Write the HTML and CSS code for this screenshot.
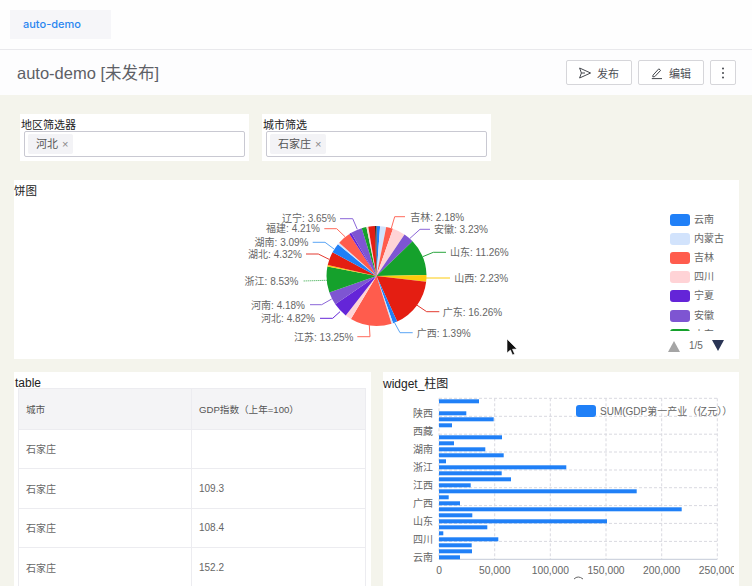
FILE: index.html
```html
<!DOCTYPE html>
<html lang="zh-CN">
<head>
    <meta charset="UTF-8">
    <meta name="viewport" content="width=device-width, initial-scale=1.0">
    <title>auto-demo</title>
    <link rel="stylesheet" href="styles.css">
</head>
<body>
    <header class="tabbar">
        <div class="tab">auto-demo</div>
    </header>

    <div class="titlebar">
        <h1>auto-demo [未发布]</h1>
        <div class="actions">
            <button class="btn">
                <svg width="14" height="14" viewBox="0 0 14 14"><path class="icon-line" d="M1.6 2 L12.6 7 L1.6 12 L3.4 7 Z M3.4 7 H7"/></svg>
                发布
            </button>
            <button class="btn">
                <svg width="14" height="14" viewBox="0 0 14 14"><path class="icon-line" d="M3 9.2 L8.8 2.8 L10.6 4.4 L4.8 10.6 L2.8 10.9 Z M1.8 12.6 H12"/></svg>
                编辑
            </button>
            <button class="btn btn-more">
                <svg width="4" height="14" viewBox="0 0 4 14"><circle class="dot" cx="2" cy="2.5" r="1"/><circle class="dot" cx="2" cy="7" r="1"/><circle class="dot" cx="2" cy="11.5" r="1"/></svg>
            </button>
        </div>
    </div>

    <main class="dashboard">
        <div class="filters">
            <div class="filter">
                <label>地区筛选器</label>
                <div class="select"><span class="tag">河北<i>×</i></span></div>
            </div>
            <div class="filter">
                <label>城市筛选</label>
                <div class="select"><span class="tag">石家庄<i>×</i></span></div>
            </div>
        </div>

        <section class="card card-pie">
            <div class="card-title">饼图</div>
            <div class="pie-body">
                <svg class="pie-svg" width="650" height="163" viewBox="14 196 650 163">
                    <g transform="rotate(-90 376.5 276)">
                        <circle class="slice c-blue" cx="376.5" cy="276" r="25" pathLength="100" stroke-dasharray="1.2 100" stroke-dashoffset="0"/>
                        <circle class="slice c-skyl" cx="376.5" cy="276" r="25" pathLength="100" stroke-dasharray="2 100" stroke-dashoffset="-1.2"/>
                        <circle class="slice c-coral" cx="376.5" cy="276" r="25" pathLength="100" stroke-dasharray="2.18 100" stroke-dashoffset="-3.2"/>
                        <circle class="slice c-pink" cx="376.5" cy="276" r="25" pathLength="100" stroke-dasharray="4.1 100" stroke-dashoffset="-5.38"/>
                        <circle class="slice c-lpurple" cx="376.5" cy="276" r="25" pathLength="100" stroke-dasharray="3.3 100" stroke-dashoffset="-9.5"/>
                        <circle class="slice c-green" cx="376.5" cy="276" r="25" pathLength="100" stroke-dasharray="11.9 100" stroke-dashoffset="-12.8"/>
                        <circle class="slice c-yellow" cx="376.5" cy="276" r="25" pathLength="100" stroke-dasharray="2.23 100" stroke-dashoffset="-24.7"/>
                        <circle class="slice c-red" cx="376.5" cy="276" r="25" pathLength="100" stroke-dasharray="16.26 100" stroke-dashoffset="-26.93"/>
                        <circle class="slice c-blue" cx="376.5" cy="276" r="25" pathLength="100" stroke-dasharray="1.39 100" stroke-dashoffset="-43.19"/>
                        <circle class="slice c-skyl" cx="376.5" cy="276" r="25" pathLength="100" stroke-dasharray="0.5 100" stroke-dashoffset="-44.58"/>
                        <circle class="slice c-coral" cx="376.5" cy="276" r="25" pathLength="100" stroke-dasharray="13.5 100" stroke-dashoffset="-45.08"/>
                        <circle class="slice c-pink" cx="376.5" cy="276" r="25" pathLength="100" stroke-dasharray="2 100" stroke-dashoffset="-58.58"/>
                        <circle class="slice c-purple" cx="376.5" cy="276" r="25" pathLength="100" stroke-dasharray="4.82 100" stroke-dashoffset="-60.58"/>
                        <circle class="slice c-lpurple" cx="376.5" cy="276" r="25" pathLength="100" stroke-dasharray="4.18 100" stroke-dashoffset="-65.4"/>
                        <circle class="slice c-green" cx="376.5" cy="276" r="25" pathLength="100" stroke-dasharray="8.53 100" stroke-dashoffset="-69.58"/>
                        <circle class="slice c-yellow" cx="376.5" cy="276" r="25" pathLength="100" stroke-dasharray="0.5 100" stroke-dashoffset="-78.11"/>
                        <circle class="slice c-red" cx="376.5" cy="276" r="25" pathLength="100" stroke-dasharray="4.32 100" stroke-dashoffset="-78.61"/>
                        <circle class="slice c-blue" cx="376.5" cy="276" r="25" pathLength="100" stroke-dasharray="3.09 100" stroke-dashoffset="-82.93"/>
                        <circle class="slice c-skyl" cx="376.5" cy="276" r="25" pathLength="100" stroke-dasharray="0.6 100" stroke-dashoffset="-86.02"/>
                        <circle class="slice c-coral" cx="376.5" cy="276" r="25" pathLength="100" stroke-dasharray="4.21 100" stroke-dashoffset="-86.62"/>
                        <circle class="slice c-purple" cx="376.5" cy="276" r="25" pathLength="100" stroke-dasharray="0.7 100" stroke-dashoffset="-90.83"/>
                        <circle class="slice c-lpurple" cx="376.5" cy="276" r="25" pathLength="100" stroke-dasharray="3.65 100" stroke-dashoffset="-91.53"/>
                        <circle class="slice c-green" cx="376.5" cy="276" r="25" pathLength="100" stroke-dasharray="1.5 100" stroke-dashoffset="-95.18"/>
                        <circle class="slice c-pink" cx="376.5" cy="276" r="25" pathLength="100" stroke-dasharray="0.6 100" stroke-dashoffset="-96.68"/>
                        <circle class="slice c-red" cx="376.5" cy="276" r="25" pathLength="100" stroke-dasharray="2.2 100" stroke-dashoffset="-97.28"/>
                        <circle class="slice c-dark" cx="376.5" cy="276" r="25" pathLength="100" stroke-dasharray="0.52 100" stroke-dashoffset="-99.48"/>
                    </g>

                    <polyline class="lead l-coral" points="391.3,228.3 394.7,216.7 405,216.7"/>
                    <polyline class="lead l-lpurple" points="410,238.3 420,229.3 430,229.3"/>
                    <polyline class="lead l-green" points="422.7,256.7 433.3,252.3 446,252.3"/>
                    <polyline class="lead l-yellow" points="426,278 450,278"/>
                    <polyline class="lead l-red" points="416.7,305 426.7,311.7 439.3,311.7"/>
                    <polyline class="lead l-blue" points="394,321.7 400,332.7 412.7,332.7"/>
                    <polyline class="lead l-coral" points="369.3,325 370,336.7 357.3,336.7"/>
                    <polyline class="lead l-purple" points="340,311.7 332.7,318.3 320,318.3"/>
                    <polyline class="lead l-lpurple" points="331.7,299 321.7,304.7 310,304.7"/>
                    <polyline class="lead l-green l-dot" points="326.7,280.3 302.7,281"/>
                    <polyline class="lead l-red" points="329,259.3 318.3,254 306,254"/>
                    <polyline class="lead l-blue" points="334,249 325,242.3 312.7,242.3"/>
                    <polyline class="lead l-coral" points="345,236.7 336.7,228.7 324.3,228.7"/>
                    <polyline class="lead l-lpurple" points="357.3,229.3 352.7,218.7 340,218.7"/>

                    <text class="pie-label" x="410.3" y="220.5">吉林: 2.18%</text>
                    <text class="pie-label" x="434" y="233">安徽: 3.23%</text>
                    <text class="pie-label" x="450" y="256">山东: 11.26%</text>
                    <text class="pie-label" x="454.3" y="281.5">山西: 2.23%</text>
                    <text class="pie-label" x="442.7" y="315.5">广东: 16.26%</text>
                    <text class="pie-label" x="416.7" y="336.5">广西: 1.39%</text>
                    <text class="pie-label end" x="353.5" y="340.5">江苏: 13.25%</text>
                    <text class="pie-label end" x="315" y="322">河北: 4.82%</text>
                    <text class="pie-label end" x="305" y="308.5">河南: 4.18%</text>
                    <text class="pie-label end" x="298.5" y="284.5">浙江: 8.53%</text>
                    <text class="pie-label end" x="302" y="258">湖北: 4.32%</text>
                    <text class="pie-label end" x="308.5" y="245.5">湖南: 3.09%</text>
                    <text class="pie-label end" x="320" y="232">福建: 4.21%</text>
                    <text class="pie-label end" x="336" y="222">辽宁: 3.65%</text>
                </svg>

                <div class="legend-col">
                    <ul class="legend">
                        <li><span class="swatch s-blue"></span>云南</li>
                        <li><span class="swatch s-skyl"></span>内蒙古</li>
                        <li><span class="swatch s-coral"></span>吉林</li>
                        <li><span class="swatch s-pink"></span>四川</li>
                        <li><span class="swatch s-purple"></span>宁夏</li>
                        <li><span class="swatch s-lpurple"></span>安徽</li>
                        <li><span class="swatch s-green"></span>山东</li>
                    </ul>
                    <div class="pager">
                        <span class="tri tri-up"></span>
                        <span class="pager-num">1/5</span>
                        <span class="tri tri-down"></span>
                    </div>
                </div>
            </div>
        </section>

        <div class="bottom-row">
            <section class="card card-table">
                <div class="card-title">table</div>
                <table class="data-table">
                    <thead>
                        <tr><th class="col-city">城市</th><th>GDP指数（上年=100）</th></tr>
                    </thead>
                    <tbody>
                        <tr><td>石家庄</td><td></td></tr>
                        <tr><td>石家庄</td><td>109.3</td></tr>
                        <tr><td>石家庄</td><td>108.4</td></tr>
                        <tr><td>石家庄</td><td>152.2</td></tr>
                    </tbody>
                </table>
            </section>

            <section class="card card-bar">
                <div class="card-title">widget_柱图</div>
                <svg class="bar-svg" width="351" height="195" viewBox="383 391 351 195">
                    <g class="grid">
                        <path d="M439 398.3 V559.3 M494.7 398.3 V559.3 M550.3 398.3 V559.3 M606 398.3 V559.3 M661.7 398.3 V559.3 M717.3 398.3 V559.3"/>
                        <path d="M439 398.3 H717.3 M439 416.3 H717.3 M439 434.2 H717.3 M439 452 H717.3 M439 470 H717.3 M439 487.7 H717.3 M439 505.6 H717.3 M439 523.4 H717.3 M439 541.4 H717.3"/>
                    </g>
                    <path class="axis" d="M439 559.3 H717.3"/>

                    <g class="bars">
                        <rect x="439" y="399.3" width="40" height="4"/>
                        <rect x="439" y="411.3" width="27.3" height="4"/>
                        <rect x="439" y="417.3" width="54.7" height="4"/>
                        <rect x="439" y="423.3" width="13" height="4"/>
                        <rect x="439" y="435.3" width="63" height="4"/>
                        <rect x="439" y="441.3" width="15" height="4"/>
                        <rect x="439" y="447.3" width="46.3" height="4"/>
                        <rect x="439" y="453.3" width="64.7" height="4"/>
                        <rect x="439" y="459.3" width="7" height="4"/>
                        <rect x="439" y="465.3" width="127.3" height="4"/>
                        <rect x="439" y="471.3" width="62.7" height="4"/>
                        <rect x="439" y="477.3" width="72" height="4"/>
                        <rect x="439" y="483.3" width="31.7" height="4"/>
                        <rect x="439" y="489.3" width="197.7" height="4"/>
                        <rect x="439" y="495.3" width="9.7" height="4"/>
                        <rect x="439" y="501.3" width="21" height="4"/>
                        <rect x="439" y="507.3" width="242.7" height="4"/>
                        <rect x="439" y="513.3" width="33.3" height="4"/>
                        <rect x="439" y="519.3" width="168" height="4"/>
                        <rect x="439" y="525.3" width="48.3" height="4"/>
                        <rect x="439" y="531.3" width="4.3" height="4"/>
                        <rect x="439" y="537.3" width="59.3" height="4"/>
                        <rect x="439" y="543.3" width="32.7" height="4"/>
                        <rect x="439" y="549.3" width="33" height="4"/>
                        <rect x="439" y="555.3" width="21" height="4"/>
                    </g>

                    <g class="bar-cat">
                        <text x="433" y="417">陕西</text>
                        <text x="433" y="435">西藏</text>
                        <text x="433" y="453">湖南</text>
                        <text x="433" y="471">浙江</text>
                        <text x="433" y="489">江西</text>
                        <text x="433" y="507">广西</text>
                        <text x="433" y="525">山东</text>
                        <text x="433" y="543">四川</text>
                        <text x="433" y="561">云南</text>
                    </g>
                    <g class="bar-val">
                        <text x="439" y="574">0</text>
                        <text x="494.7" y="574">50,000</text>
                        <text x="550.3" y="574">100,000</text>
                        <text x="606" y="574">150,000</text>
                        <text x="661.7" y="574">200,000</text>
                        <text x="717.3" y="574">250,000</text>
                    </g>
                    <path class="axis-arc" d="M574 579 Q578 575 583 579"/>

                    <rect class="bar-key" x="576" y="405" width="20" height="12" rx="3"/>
                    <text class="bar-key-text" x="600" y="415">SUM(GDP第一产业（亿元））</text>
                </svg>
            </section>
        </div>
    </main>

    <svg class="cursor" width="12" height="18" viewBox="0 0 12 18"><path d="M1 1 V15 L4.4 12 L6.6 17 L8.6 16 L6.5 11.2 L11 11 Z"/></svg>
</body>
</html>
```

FILE: styles.css
```css
* {
    box-sizing: border-box;
}
html, body {
    height: 586px;
}
body {
    margin: 0;
    overflow: hidden;
    background-color: #f4f4ec;
    color: #222;
    font-family: "Liberation Sans", "Noto Sans CJK SC", sans-serif;
    position: relative;
}
.tabbar {
    height: 50px;
    padding: 10px 0 0 10px;
    background-color: #fefefe;
    border-bottom: 1px solid #e9e9ec;
}
.tab {
    width: 101px;
    height: 29px;
    padding-left: 13px;
    background-color: #f6f6f9;
    color: #2a86f0;
    font-family: Inter, "Liberation Sans", sans-serif;
    font-size: 11px;
    font-weight: 500;
    line-height: 29px;
}
.titlebar {
    height: 45px;
    padding: 10px 16px 0 17px;
    display: flex;
    justify-content: space-between;
    align-items: flex-start;
    background-color: #fdfdfe;
}
.titlebar h1 {
    margin: 0;
    color: #5d6066;
    font-size: 16.5px;
    font-weight: normal;
    line-height: 26px;
}
.actions {
    display: flex;
    gap: 6px;
}
.btn {
    width: 66px;
    height: 25px;
    padding: 0 1px 0 0;
    display: flex;
    justify-content: center;
    align-items: center;
    gap: 5px;
    background-color: #fff;
    border: 1px solid #d6d6da;
    border-radius: 2px;
    color: #4c4f55;
    font-family: inherit;
    font-size: 11px;
}
.btn-more {
    width: 26px;
    padding: 0;
}
.icon-line {
    fill: none;
    stroke: #44474d;
    stroke-width: 1;
    stroke-linejoin: round;
}
.dot {
    fill: #44474d;
}

.dashboard {
    padding-top: 19px;
}
.filters {
    display: flex;
    gap: 13px;
    padding-left: 20px;
}
.filter {
    width: 229px;
    height: 47px;
    padding: 4px 4px 0;
    background-color: #fff;
}
.filter label {
    display: block;
    height: 13px;
    margin-left: -3px;
    color: #222;
    font-size: 11px;
    line-height: 15px;
}
.select {
    height: 26px;
    padding: 2px 3px;
    background-color: #fff;
    border: 1px solid #c9c9d2;
    border-radius: 2px;
}
.tag {
    display: inline-block;
    height: 20px;
    padding: 0 5px 0 8px;
    background-color: #f3f3f6;
    border-radius: 2px;
    color: #555;
    font-size: 11px;
    line-height: 20px;
}
.tag i {
    margin-left: 4px;
    color: #888;
    font-style: normal;
}

.card {
    background-color: #fff;
}
.card-title {
    color: #222;
    font-size: 11.5px;
    line-height: 14px;
}
.card-pie {
    width: 725px;
    height: 179px;
    margin: 19px 0 0 14px;
    padding-top: 4px;
}
.pie-body {
    display: flex;
    margin-top: -2px;
}
.pie-svg {
    display: block;
}
.slice {
    fill: none;
    stroke-width: 50;
}
.c-blue { stroke: #2080f7; }
.c-skyl { stroke: #d2e3fc; }
.c-coral { stroke: #ff5c4d; }
.c-pink { stroke: #ffd3d6; }
.c-purple { stroke: #6425d8; }
.c-lpurple { stroke: #7e55d2; }
.c-green { stroke: #15a12c; }
.c-yellow { stroke: #fccb0d; }
.c-red { stroke: #e41e12; }
.c-dark { stroke: #3a2a1a; }
.lead {
    fill: none;
    stroke-width: 1;
}
.l-blue { stroke: #5aa5f5; }
.l-coral { stroke: #ff6a5c; }
.l-lpurple { stroke: #8b66d8; }
.l-purple { stroke: #6425d8; }
.l-green { stroke: #2ba53f; }
.l-yellow { stroke: #fccb0d; }
.l-red { stroke: #e33a30; }
.l-dot { stroke-dasharray: 1 1; }
.pie-label {
    fill: #666;
    font-size: 10px;
}
.pie-label.end {
    text-anchor: end;
}

.legend-col {
    margin-left: 6px;
    width: 69px;
}
.legend {
    height: 121px;
    margin: 14px 0 0;
    padding: 0;
    overflow: hidden;
    list-style: none;
}
.legend li {
    height: 19.2px;
    display: flex;
    align-items: center;
    gap: 4px;
    color: #666;
    font-size: 10px;
    line-height: 10px;
}
.swatch {
    width: 20px;
    height: 12px;
    border-radius: 3px;
}
.s-blue { background-color: #2080f7; }
.s-skyl { background-color: #d2e3fc; }
.s-coral { background-color: #ff5c4d; }
.s-pink { background-color: #ffd3d6; }
.s-purple { background-color: #6425d8; }
.s-lpurple { background-color: #7e55d2; }
.s-green { background-color: #15a12c; }
.pager {
    display: flex;
    align-items: center;
    margin: 8px 0 0 -2px;
    color: #666;
    font-size: 10px;
}
.pager-num {
    margin: 0 9px;
}
.tri {
    width: 0;
    height: 0;
    border-left: 6px solid transparent;
    border-right: 6px solid transparent;
}
.tri-up {
    margin-top: 2px;
    border-bottom: 11px solid #a5a5a5;
}
.tri-down {
    border-top: 11px solid #2a3555;
}

.bottom-row {
    display: grid;
    grid-template-columns: 357px 356px;
    gap: 12px;
    margin: 13px 0 0 14px;
}
.card-table {
    height: 214px;
    padding: 5px 5px 0 1px;
}
.card-table .card-title {
    margin-bottom: -1px;
    font-size: 12px;
    height: 12px;
    line-height: 12px;
}
.data-table {
    width: 348px;
    margin-left: 3px;
    border-collapse: collapse;
    table-layout: fixed;
    color: #666;
    font-size: 10px;
}
.data-table th, .data-table td {
    padding: 0 0 0 7px;
    border: 1px solid #ececf0;
    text-align: left;
}
.data-table th {
    height: 40.5px;
    background-color: #f4f4f6;
    color: #555;
    font-size: 9.6px;
    font-weight: normal;
}
.data-table .col-city {
    width: 173px;
}
.data-table td {
    height: 39.6px;
}
.card-bar {
    height: 214px;
    padding-top: 5px;
}
.card-bar .card-title {
    height: 14px;
    font-size: 12px;
}
.bar-svg {
    display: block;
}
.grid path {
    fill: none;
    stroke: #d9d9e0;
    stroke-width: 1;
    stroke-dasharray: 3 2;
}
.axis {
    stroke: #c4cad8;
    stroke-width: 1;
}
.axis-arc {
    fill: none;
    stroke: #666;
    stroke-width: 1;
}
.bars rect {
    fill: #2080f7;
}
.bar-cat text {
    fill: #666;
    font-size: 10px;
    text-anchor: end;
}
.bar-val text {
    fill: #666;
    font-size: 10.3px;
    text-anchor: middle;
}
.bar-key {
    fill: #2080f7;
}
.bar-key-text {
    fill: #666;
    font-size: 10px;
}

/* pointer captured in the screenshot */
.cursor {
    position: absolute;
    left: 506px;
    top: 338px;
}
.cursor path {
    fill: #111;
    stroke: #fff;
    stroke-width: 0.6;
}
```
